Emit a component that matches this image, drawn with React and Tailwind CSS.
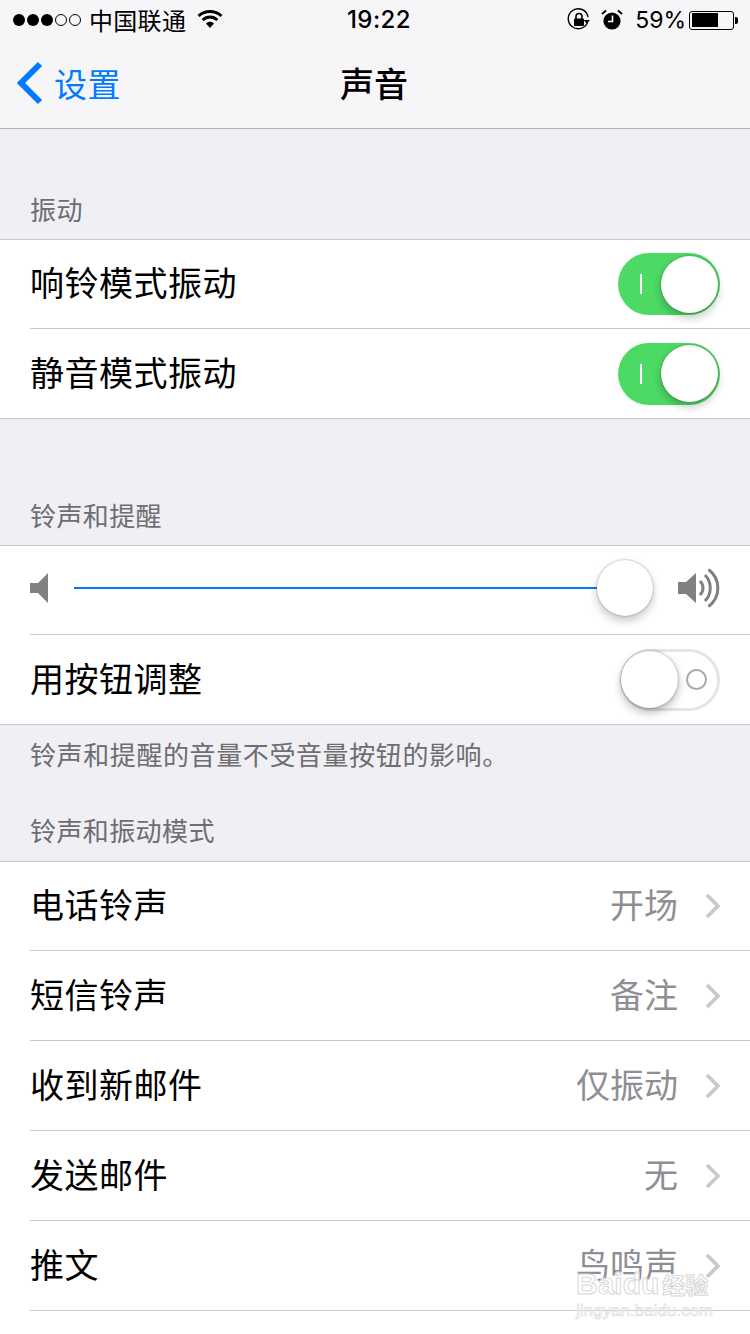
import React from 'react';

const cjk = "font-['Noto_Sans_CJK_SC','Liberation_Sans',sans-serif]";

const Chevron = () => (
  <svg width="17" height="26" viewBox="0 0 17 26" fill="none" className="ml-[25px] shrink-0">
    <path d="M4 2 L15 13 L4 24" stroke="#c7c7cc" strokeWidth="3.6" />
  </svg>
);

const Wifi = () => (
  <svg width="26" height="20" viewBox="0 0 26 20" fill="none" className="ml-[11px] mb-[3px]">
    <path d="M1.5 7 C8 1 18 1 24.5 7" stroke="#000" strokeWidth="2.8" />
    <path d="M5.6 11 C10 7 16 7 20.4 11" stroke="#000" strokeWidth="2.8" />
    <path d="M9 14.5 C11.5 12.2 14.5 12.2 17 14.5 L13 19 Z" fill="#000" />
  </svg>
);

const RotationLock = () => (
  <svg width="24" height="24" viewBox="0 0 24 24" fill="none">
    <path d="M20.5 14.5 A10 10 0 1 1 20.3 6.5 L21 9" stroke="#000" strokeWidth="1.4" />
    <path d="M17.5 14 h6.5 l-3.2 3.4 Z" fill="#000" transform="translate(-1 -2)" />
    <rect x="7" y="10.5" width="10" height="7.5" rx="1" fill="#000" />
    <path d="M9 11 V8.5 a3 3 0 0 1 6 0 V11" stroke="#000" strokeWidth="1.6" />
  </svg>
);

const Alarm = () => (
  <svg width="22" height="22" viewBox="0 0 22 22" fill="none">
    <circle cx="11" cy="12" r="8.6" fill="#000" />
    <path d="M1 5 L5 1.5 M21 5 L17 1.5" stroke="#000" strokeWidth="2" />
    <path d="M11.5 6.5 V12.5 H7" stroke="#fff" strokeWidth="1.6" />
  </svg>
);

const Battery = () => (
  <div className="flex items-center ml-[3px]">
    <div className="w-[45px] h-[19px] rounded-[3px] border border-black p-[1.5px] flex">
      <div className="w-[26px] h-full bg-black" />
    </div>
    <div className="w-[3px] h-[7px] bg-black rounded-r-[2px] ml-[1px]" />
  </div>
);

const SpeakerLow = () => (
  <svg width="18" height="30" viewBox="0 0 18 30" className="shrink-0 mb-[4px]">
    <path d="M0 10 H8 L18 0 V30 L8 20 H0 Z" fill="#808080" />
  </svg>
);

const SpeakerHigh = () => (
  <svg width="42" height="40" viewBox="0 0 42 40" fill="none" className="shrink-0">
    <path d="M0 14 H8 L18 5 V35 L8 26 H0 Z" fill="#808080" />
    <path d="M22 13 C26 17 26 23 22 27" stroke="#808080" strokeWidth="3" />
    <path d="M27 7 C34 14 34 26 27 33" stroke="#808080" strokeWidth="3" />
    <path d="M30.5 1.5 C43 11 43 29 30.5 38.5" stroke="#808080" strokeWidth="3" />
  </svg>
);

const ToggleOn = () => (
  <div className="relative w-[102px] h-[62px] rounded-full bg-[#4cd964] flex items-center shrink-0">
    <div className="absolute left-[22px] w-[2px] h-[20px] bg-white" />
    <div className="absolute left-[43px] w-[57px] h-[57px] rounded-full bg-white shadow-[0_5px_8px_rgba(0,0,0,0.22),0_0_2px_rgba(0,0,0,0.35)]" />
  </div>
);

const ToggleOff = () => (
  <div className="relative w-[100px] h-[62px] rounded-full border-[3px] border-[#e5e5e5] bg-white flex items-center shrink-0">
    <div className="absolute left-[63px] w-[21px] h-[21px] rounded-full border-2 border-[#a8a8a8]" />
    <div className="absolute left-[-2px] top-[-1px] w-[57px] h-[57px] rounded-full bg-white shadow-[0_5px_10px_rgba(0,0,0,0.25),0_0_3px_rgba(0,0,0,0.35)]" />
  </div>
);

const Row = ({ h = 'h-[89px]', last, children }) => (
  <div className={`${h} pl-[30px] relative`}>
    <div className={`h-full flex items-center pr-[30px] ${last ? '' : 'border-b border-[#c8c7cc]'}`}>
      {children}
    </div>
  </div>
);

const Label = ({ children }) => (
  <span className="flex-1 pb-[4px] text-[34px] leading-[44px] text-black tracking-[0.5px]">{children}</span>
);

const tones = [
  { name: '电话铃声', value: '开场', h: 'h-[89px]' },
  { name: '短信铃声', value: '备注', h: 'h-[90px]' },
  { name: '收到新邮件', value: '仅振动', h: 'h-[90px]' },
  { name: '发送邮件', value: '无', h: 'h-[90px]' },
  { name: '推文', value: '鸟鸣声', h: 'h-[90px]' },
];

export default function App() {
  return (
    <div className={`relative w-[750px] h-[1334px] overflow-hidden bg-[#efeff4] ${cjk}`}>
      {/* Status + nav bar */}
      <div className="bg-[#f6f6f8] border-b border-[#b2b2b2] h-[129px]">
        <div className="h-[40px] flex items-center pl-[13px] pr-[12px] relative">
          <div className="flex items-center gap-[2px]">
            {[0, 1, 2].map((i) => (
              <div key={i} className="w-[12px] h-[12px] rounded-full bg-black" />
            ))}
            {[0, 1].map((i) => (
              <div key={i} className="w-[12px] h-[12px] rounded-full border border-black" />
            ))}
          </div>
          <span className="ml-[8px] text-[24px] leading-[32px] text-black tracking-[0.3px]">中国联通</span>
          <Wifi />
          <span className="absolute left-[347px] top-[5px] text-[24px] leading-[30px] font-medium text-black tracking-[0.4px] font-['Inter',sans-serif]">19:22</span>
          <div className="ml-auto flex items-center gap-[10px]">
            <RotationLock />
            <Alarm />
            <div className="flex items-center">
              <span className="ml-[2px] text-[23px] leading-[30px] text-black font-['Inter',sans-serif]">59%</span>
              <Battery />
            </div>
          </div>
        </div>
        <div className="h-[88px] flex items-center relative pl-[16px] pb-[2px]">
          <svg width="27" height="44" viewBox="0 0 27 44" fill="none">
            <path d="M24 3 L5 22 L24 41" stroke="#007aff" strokeWidth="6" />
          </svg>
          <span className="ml-[11px] text-[33px] leading-[44px] text-[#007aff] tracking-[0.5px]">设置</span>
          <span className="absolute left-[340px] top-[21px] text-[34px] leading-[44px] font-medium text-black">声音</span>
        </div>
      </div>

      {/* 振动 */}
      <div className="h-[110px] flex items-end pl-[30px] pb-[12px]">
        <span className="text-[26px] leading-[36px] text-[#6d6d72] tracking-[0.4px]">振动</span>
      </div>
      <div className="bg-white border-y border-[#c8c7cc]">
        <Row>
          <Label>响铃模式振动</Label>
          <ToggleOn />
        </Row>
        <Row last>
          <Label>静音模式振动</Label>
          <ToggleOn />
        </Row>
      </div>

      {/* 铃声和提醒 */}
      <div className="h-[126px] flex items-end pl-[30px] pb-[12px]">
        <span className="text-[26px] leading-[36px] text-[#6d6d72] tracking-[0.4px]">铃声和提醒</span>
      </div>
      <div className="bg-white border-y border-[#c8c7cc]">
        <Row>
          <SpeakerLow />
          <div className="ml-[26px] mb-[4px] w-[523px] h-[2px] bg-[#007aff]" />
          <div className="w-[56px] h-[56px] mb-[4px] rounded-full bg-white shrink-0 shadow-[0_5px_10px_rgba(0,0,0,0.22),0_0_2px_rgba(0,0,0,0.4)]" />
          <div className="ml-[25px] mb-[4px]">
            <SpeakerHigh />
          </div>
        </Row>
        <Row last>
          <Label>用按钮调整</Label>
          <ToggleOff />
        </Row>
      </div>
      <div className="h-[136px] pl-[30px] pt-[11px]">
        <div className="text-[26px] leading-[36px] text-[#6d6d72] tracking-[0.6px]">铃声和提醒的音量不受音量按钮的影响。</div>
        <div className="mt-[40px] text-[26px] leading-[36px] text-[#6d6d72] tracking-[0.4px]">铃声和振动模式</div>
      </div>

      {/* 铃声和振动模式 */}
      <div className="bg-white border-t border-[#c8c7cc] h-[480px]">
        {tones.map((t) => (
          <Row key={t.name} h={t.h}>
            <Label>{t.name}</Label>
            <span className="pb-[4px] text-[34px] leading-[44px] text-[#8e8e93]">{t.value}</span>
            <Chevron />
          </Row>
        ))}
      </div>

      {/* Watermark over the last row */}
      <div className="absolute left-[576px] top-[1269px] flex flex-col items-start whitespace-nowrap pointer-events-none">
        <div className="flex items-center h-[30px]">
          <span className="text-[30px] leading-[30px] font-bold text-white/80 font-['Liberation_Sans',sans-serif] [-webkit-text-stroke:1px_#d8d8d8]">Baidu</span>
          <span className="ml-[3px] text-[23px] leading-[30px] font-bold text-white/80 [-webkit-text-stroke:1px_#d8d8d8]">经验</span>
        </div>
        <span className="mt-[2px] text-[17px] leading-[20px] text-white/80 font-['Liberation_Sans',sans-serif] [-webkit-text-stroke:0.6px_#d8d8d8]">jingyan.baidu.com</span>
      </div>
    </div>
  );
}
